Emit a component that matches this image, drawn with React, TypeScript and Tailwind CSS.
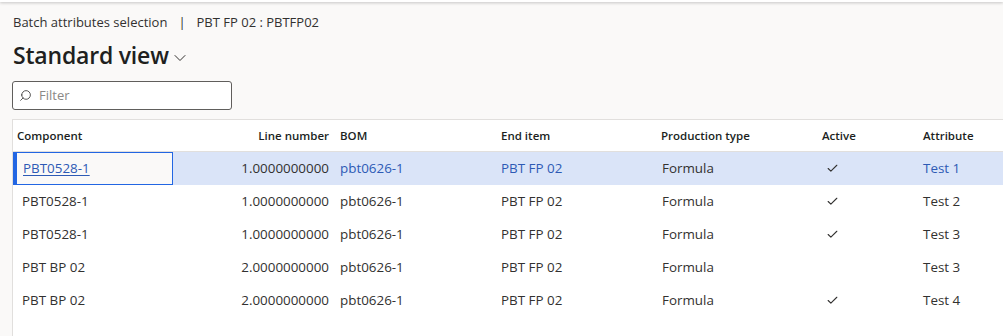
import { Search, ChevronDown, Check } from 'lucide-react';

type Row = {
  component: string;
  line: string;
  bom: string;
  endItem: string;
  type: string;
  active: boolean;
  attribute: string;
};

const rows: Row[] = [
  { component: 'PBT0528-1', line: '1.0000000000', bom: 'pbt0626-1', endItem: 'PBT FP 02', type: 'Formula', active: true, attribute: 'Test 1' },
  { component: 'PBT0528-1', line: '1.0000000000', bom: 'pbt0626-1', endItem: 'PBT FP 02', type: 'Formula', active: true, attribute: 'Test 2' },
  { component: 'PBT0528-1', line: '1.0000000000', bom: 'pbt0626-1', endItem: 'PBT FP 02', type: 'Formula', active: true, attribute: 'Test 3' },
  { component: 'PBT BP 02', line: '2.0000000000', bom: 'pbt0626-1', endItem: 'PBT FP 02', type: 'Formula', active: false, attribute: 'Test 3' },
  { component: 'PBT BP 02', line: '2.0000000000', bom: 'pbt0626-1', endItem: 'PBT FP 02', type: 'Formula', active: true, attribute: 'Test 4' },
];

const App = () => {
  return (
    <div
      className="w-[1003px] h-[336px] overflow-hidden bg-[#faf9f8] text-[#323130] flex flex-col"
      style={{ fontFamily: '"Open Sans", "Noto Sans", sans-serif' }}
    >
      <div className="h-[2px] shrink-0 bg-white shadow-[0_1px_3px_rgba(0,0,0,0.25)]" />

      <div className="pl-[12px] flex-1 flex flex-col">
        <div className="mt-[12px] flex items-center h-[18px] text-[13px] pl-[1px]">
          <span>Batch attributes selection</span>
          <span className="mx-[11px] text-[#323130]">|</span>
          <span>PBT FP 02 : PBTFP02</span>
        </div>

        <div className="mt-[10px] flex items-center h-[26px]">
          <h1 className="text-[23px] font-semibold text-[#201f1e] tracking-[-0.2px] pl-[1px]">Standard view</h1>
          <ChevronDown size={20} strokeWidth={1.2} className="ml-[1px] mt-[6px] text-[#323130]" />
        </div>

        <div className="mt-[13px] w-[220px] h-[29px] border border-[#605e5c] rounded-[3px] bg-white flex items-center pl-[6px]">
          <Search size={13} strokeWidth={1.5} className="text-[#323130] -scale-x-100" />
          <span className="ml-[7px] text-[13px] text-[#8a8886]">Filter</span>
        </div>

        <div className="mt-[9px] flex-1 border-t border-l border-[#e1dfdd] bg-white">
          {/* header */}
          <div className="flex h-[32px] items-center border-b border-[#e1dfdd] text-[11.5px] font-semibold text-[#201f1e]">
            <div className="w-[160px] pl-[4px]">Component</div>
            <div className="w-[162px] text-right pr-[6px]">Line number</div>
            <div className="w-[160px] pl-[5px]">BOM</div>
            <div className="w-[161px] pl-[6px]">End item</div>
            <div className="w-[160px] pl-[5px]">Production type</div>
            <div className="w-[101px] pl-[6px]">Active</div>
            <div className="flex-1 pl-[6px]">Attribute</div>
          </div>

          {rows.map((r, i) => {
            const selected = i === 0;
            return (
              <div
                key={i}
                className={`flex h-[33px] items-center text-[13.4px] ${selected ? 'bg-[#dae4f8]' : 'bg-white'}`}
              >
                <div className={`w-[3px] h-full ${selected ? 'bg-[#2266e3]' : ''}`} />
                <div
                  className={`w-[157px] h-full flex items-center pl-[6px] ${
                    selected ? 'border border-[#2266e3] bg-[#faf9f8] pl-[5px]' : ''
                  }`}
                >
                  {selected ? (
                    <span className="text-[#2d5ab5] underline underline-offset-2">{r.component}</span>
                  ) : (
                    r.component
                  )}
                </div>
                <div className="w-[162px] text-right pr-[6px]">{r.line}</div>
                <div className={`w-[160px] pl-[5px] ${selected ? 'text-[#2d5ab5]' : ''}`}>{r.bom}</div>
                <div className={`w-[161px] pl-[6px] ${selected ? 'text-[#2d5ab5]' : ''}`}>{r.endItem}</div>
                <div className="w-[160px] pl-[6px]">{r.type}</div>
                <div className="w-[101px] pl-[10px] flex items-center">
                  {r.active && <Check size={13} strokeWidth={2} className="text-[#323130]" />}
                </div>
                <div className={`flex-1 pl-[6px] ${selected ? 'text-[#2d5ab5]' : ''}`}>{r.attribute}</div>
              </div>
            );
          })}
        </div>
      </div>
    </div>
  );
};

export default App;
